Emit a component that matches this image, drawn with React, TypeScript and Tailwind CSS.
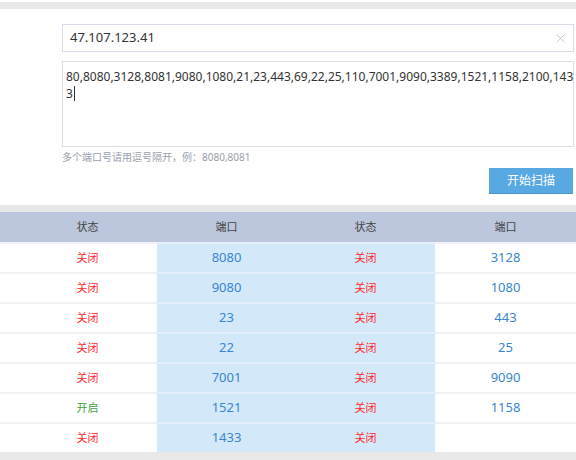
import { X } from 'lucide-react';

const rows = [
  { s1: '关闭', p1: '8080', s2: '关闭', p2: '3128' },
  { s1: '关闭', p1: '9080', s2: '关闭', p2: '1080' },
  { s1: '关闭', p1: '23', s2: '关闭', p2: '443' },
  { s1: '关闭', p1: '22', s2: '关闭', p2: '25' },
  { s1: '关闭', p1: '7001', s2: '关闭', p2: '9090' },
  { s1: '开启', p1: '1521', s2: '关闭', p2: '1158' },
  { s1: '关闭', p1: '1433', s2: '关闭', p2: '' },
];

const font = { fontFamily: '"Noto Sans", "Noto Sans CJK SC", sans-serif' };

function Status({ v }: { v: string }) {
  return (
    <span className={`text-[11px] ${v === '开启' ? 'text-[#3fa33f]' : 'text-[#ff2b2b]'}`}>{v}</span>
  );
}

export default function App() {
  return (
    <div className="w-[576px] h-[460px] bg-white overflow-hidden" style={font}>
      <div className="h-[2px] bg-white" />
      <div className="h-[7px] bg-[#e8e8e8]" />

      {/* scan form */}
      <div className="h-[196px] pl-[62px] pr-[2px] pt-[15px]">
        <div className="h-[28px] border border-[#d9dfea] flex items-center justify-between pl-[7px] pr-[5px]">
          <span className="text-[13px] text-[#333]">47.107.123.41</span>
          <X size={15} strokeWidth={1.1} className="text-[#aeb3bc]" />
        </div>
        <div className="mt-[9px] h-[86px] border border-[#d9dfea] px-[3px] pt-[6px] text-[12px] leading-[17px] text-[#333]">
          <div>80,8080,3128,8081,9080,1080,21,23,443,69,22,25,110,7001,9090,3389,1521,1158,2100,143</div>
          <div className="flex items-center">
            3<span className="inline-block w-px h-[15px] bg-[#333] ml-px" />
          </div>
        </div>
        <div className="mt-[3px] text-[10px] text-[#9aa1ad] leading-[14px]">多个端口号请用逗号隔开，例：8080,8081</div>
        <div className="flex justify-end mt-[4px] pr-px">
          <button className="w-[84px] h-[26px] bg-[#58a8e2] border-b border-[#4a95cf] text-white text-[12px]">开始扫描</button>
        </div>
      </div>

      <div className="h-[7px] bg-[#e8e8e8]" />

      {/* results */}
      <div className="grid grid-cols-[157px_139px_139px_141px] h-[30px] bg-[#bcc7dd] text-[11px] text-[#444]">
        <div className="pl-[18px] flex items-center justify-center">状态</div>
        <div className="flex items-center justify-center">端口</div>
        <div className="flex items-center justify-center">状态</div>
        <div className="flex items-center justify-center">端口</div>
      </div>
      {rows.map((r, i) => (
        <div key={i} className="grid grid-cols-[157px_139px_139px_141px] h-[30px]">
          <div className="pl-[18px] flex items-center justify-center border-t-2 border-[#f1f2f5]">
            <Status v={r.s1} />
          </div>
          <div className="flex items-center justify-center bg-[#d3e8f8] border-t-2 border-[#e3effa] text-[13px] text-[#3a86d0]">
            {r.p1}
          </div>
          <div className="flex items-center justify-center bg-[#d3e8f8] border-t-2 border-[#e3effa]">
            <Status v={r.s2} />
          </div>
          <div className="flex items-center justify-center border-t-2 border-[#f1f2f5] text-[13px] text-[#3a86d0]">
            {r.p2}
          </div>
        </div>
      ))}
      <div className="h-[8px] bg-[#e8e8e8]" />
    </div>
  );
}
